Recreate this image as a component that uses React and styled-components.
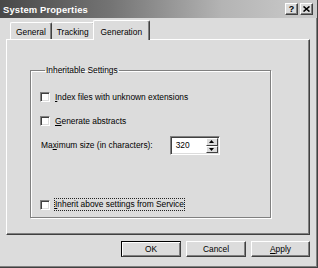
import styled, { createGlobalStyle } from 'styled-components';

const Global = createGlobalStyle`
  html, body { margin: 0; padding: 0; background: #dcdcdc; }
  * { box-sizing: border-box; }
`;

const FONT = `"Liberation Sans", Arial, sans-serif`;

// 창 전체
const Window = styled.div`
  width: 318px;
  height: 268px;
  background: #dcdcdc;
  border-right: 1px solid #404040;
  border-bottom: 1px solid #404040;
  box-shadow: inset -1px -1px 0 #808080;
  display: flex;
  flex-direction: column;
  font-family: ${FONT};
  font-size: 8.4px;
  color: #000;
  overflow: hidden;
`;

const TitleBar = styled.div`
  height: 18px;
  flex: none;
  display: flex;
  align-items: center;
  padding: 0 3px 0 3px;
  background: linear-gradient(to right, #484848 0%, #747474 35%, #b4b4b4 70%, #cccccc 100%);
`;

const Title = styled.div`
  flex: 1;
  color: #fff;
  font-weight: bold;
  font-size: 9.4px;
  letter-spacing: 0.15px;
`;

const CapButtons = styled.div`
  display: flex;
  gap: 2px;
  margin-right: 1px;
`;

const CapButton = styled.div`
  width: 13px;
  height: 12px;
  background: #dcdcdc;
  border-top: 1px solid #fff;
  border-left: 1px solid #fff;
  border-right: 1px solid #404040;
  border-bottom: 1px solid #404040;
  box-shadow: inset -1px -1px 0 #808080;
  display: flex;
  align-items: center;
  justify-content: center;
  font-weight: bold;
  font-size: 9px;
  line-height: 1;
`;

const TabRow = styled.div`
  display: flex;
  align-items: flex-end;
  height: 21px;
  padding-left: 10px;
  flex: none;
`;

const Tab = styled.div`
  height: ${(p) => (p.$active ? '20px' : '17px')};
  margin: ${(p) => (p.$active ? '0 -2px -1px -2px' : '0')};
  padding: ${(p) => (p.$active ? '2px 7px 0 7px' : '2px 5px 0 5px')};
  background: #dcdcdc;
  border-top: 1px solid #fff;
  border-left: ${(p) => (p.$first || p.$active ? '1px solid #fff' : 'none')};
  border-right: 1px solid #404040;
  box-shadow: inset -1px 0 0 #808080;
  border-radius: 2px 2px 0 0;
  position: relative;
  z-index: ${(p) => (p.$active ? 1 : 0)};
  display: flex;
  align-items: center;
  white-space: nowrap;
`;

const Panel = styled.div`
  height: 196px;
  margin: 0 7px 0 6px;
  flex: none;
  border-top: 1px solid #fff;
  border-left: 1px solid #fff;
  border-right: 1px solid #404040;
  border-bottom: 1px solid #404040;
  box-shadow: inset -1px -1px 0 #808080;
  padding: 25px 0 0 23px;
`;

const Group = styled.fieldset`
  width: 241px;
  height: 153px;
  margin: 0;
  padding: 10px 0 0 9px;
  border: 1px solid #808080;
  box-shadow: 1px 1px 0 #fff, inset 1px 1px 0 #fff;
  display: flex;
  flex-direction: column;
`;

const Legend = styled.legend`
  padding: 0 1px;
  margin-left: 5px;
`;

const Row = styled.div`
  display: flex;
  align-items: center;
  height: 25px;
  margin-top: ${(p) => p.$gap || 0}px;
`;

const Box = styled.span`
  width: 10px;
  height: 10px;
  flex: none;
  background: #fff;
  border-top: 1px solid #808080;
  border-left: 1px solid #808080;
  border-right: 1px solid #fff;
  border-bottom: 1px solid #fff;
  box-shadow: inset 1px 1px 0 #404040, inset -1px -1px 0 #dcdcdc;
  margin-right: 4px;
`;

const Label = styled.span`
  white-space: nowrap;
  padding: 1px 1px 2px 1px;
  outline: ${(p) => (p.$focus ? '1px dotted #222' : 'none')};
  outline-offset: -1px;
`;

const Field = styled.div`
  display: flex;
  width: 50px;
  height: 19px;
  margin-left: 16px;
  background: #fff;
  border-top: 1px solid #808080;
  border-left: 1px solid #808080;
  border-right: 1px solid #fff;
  border-bottom: 1px solid #fff;
  box-shadow: inset 1px 1px 0 #404040, inset -1px -1px 0 #dcdcdc;
  padding: 2px 0 0 5px;
`;

const Value = styled.div`
  flex: 1;
  line-height: 13px;
`;

const Spin = styled.div`
  width: 12px;
  display: flex;
  flex-direction: column;
  margin: -1px 1px 1px 0;
`;

const SpinBtn = styled.div`
  flex: 1;
  background: #dcdcdc;
  border-top: 1px solid #fff;
  border-left: 1px solid #fff;
  border-right: 1px solid #404040;
  border-bottom: 1px solid #404040;
  display: flex;
  align-items: center;
  justify-content: center;
`;

const Footer = styled.div`
  display: flex;
  justify-content: flex-end;
  gap: 5px;
  padding: 6px 7px 0 0;
`;

const Button = styled.div`
  width: ${(p) => p.$w || 60}px;
  height: 16px;
  display: flex;
  align-items: center;
  justify-content: center;
  background: #dcdcdc;
  border-top: 1px solid ${(p) => (p.$default ? '#000' : '#fff')};
  border-left: 1px solid ${(p) => (p.$default ? '#000' : '#fff')};
  border-right: 1px solid #404040;
  border-bottom: 1px solid #404040;
  box-shadow: ${(p) =>
    p.$default
      ? 'inset 1px 1px 0 #fff, inset -1px -1px 0 #808080'
      : 'inset -1px -1px 0 #808080'};
`;

const U = styled.span`
  text-decoration: underline;
`;

const Arrow = ({ up }) => (
  <svg width="5" height="3" viewBox="0 0 5 3">
    <path d={up ? 'M2.5 0 L5 3 L0 3 Z' : 'M0 0 L5 0 L2.5 3 Z'} fill="#000" />
  </svg>
);

export default function App() {
  return (
    <>
      <Global />
      <Window>
        <TitleBar>
          <Title>System Properties</Title>
          <CapButtons>
            <CapButton>?</CapButton>
            <CapButton>
              <svg width="7" height="6" viewBox="0 0 7 6">
                <path d="M0.5 0.5 L6.5 5.5 M6.5 0.5 L0.5 5.5" stroke="#000" strokeWidth="1.6" />
              </svg>
            </CapButton>
          </CapButtons>
        </TitleBar>

        <TabRow>
          <Tab $first>General</Tab>
          <Tab>Tracking</Tab>
          <Tab $active>Generation</Tab>
        </TabRow>

        <Panel>
          <Group>
            <Legend>Inheritable Settings</Legend>
            <Row>
              <Box />
              <Label>
                <U>I</U>ndex files with unknown extensions
              </Label>
            </Row>
            <Row>
              <Box />
              <Label>
                <U>G</U>enerate abstracts
              </Label>
            </Row>
            <Row>
              <Label>
                Ma<U>x</U>imum size (in characters):
              </Label>
              <Field>
                <Value>320</Value>
                <Spin>
                  <SpinBtn>
                    <Arrow up />
                  </SpinBtn>
                  <SpinBtn>
                    <Arrow />
                  </SpinBtn>
                </Spin>
              </Field>
            </Row>
            <Row $gap={35}>
              <Box />
              <Label $focus>
                <U>I</U>nherit above settings from Service
              </Label>
            </Row>
          </Group>
        </Panel>

        <Footer>
          <Button $default>OK</Button>
          <Button>Cancel</Button>
          <Button $w={59}>
            <U>A</U>pply
          </Button>
        </Footer>
      </Window>
    </>
  );
}
